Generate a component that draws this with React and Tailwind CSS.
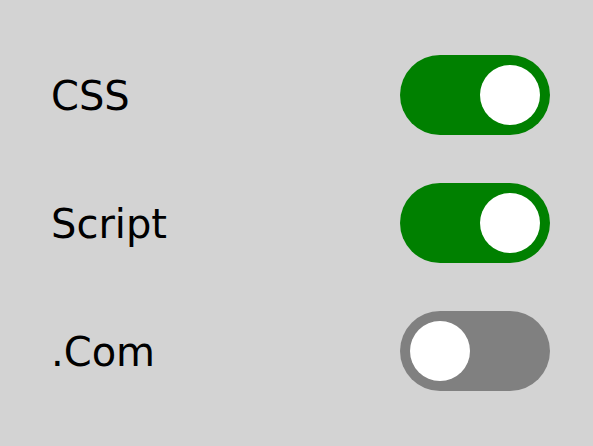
import React, { useState } from "react";

const ITEMS = [
  { id: "css", label: "CSS", on: true },
  { id: "script", label: "Script", on: true },
  { id: "com", label: ".Com", on: false },
];

const Toggle = ({ on, onClick }) => (
  <button
    type="button"
    onClick={onClick}
    className={`relative w-[150px] h-[80px] rounded-full shrink-0 ${on ? "bg-[#008000]" : "bg-[#808080]"}`}
  >
    <span
      className={`absolute top-[10px] w-[60px] h-[60px] rounded-full bg-white ${on ? "left-[80px]" : "left-[10px]"}`}
    />
  </button>
);

export default function App() {
  const [state, setState] = useState(ITEMS.map((i) => i.on));

  return (
    <div
      className="w-[593px] h-[446px] bg-[#d3d3d3] pt-[55px] pl-[51px] pr-[43px] flex flex-col gap-[48px] text-black"
      style={{ fontFamily: '"DejaVu Sans", sans-serif' }}
    >
      {ITEMS.map((item, idx) => (
        <div key={item.id} className="flex items-center justify-between h-[80px]">
          <span className="text-[40px] leading-none pt-[2px]">{item.label}</span>
          <Toggle
            on={state[idx]}
            onClick={() => setState((s) => s.map((v, i) => (i === idx ? !v : v)))}
          />
        </div>
      ))}
    </div>
  );
}
